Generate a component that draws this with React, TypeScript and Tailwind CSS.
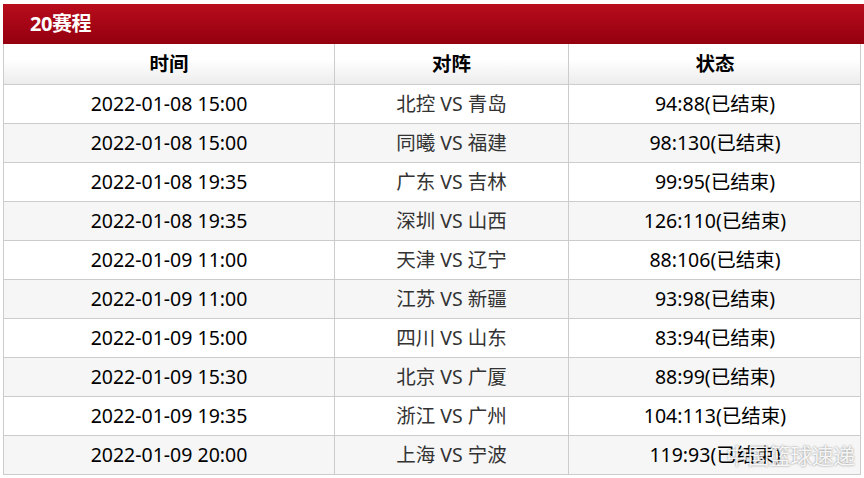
import type { FC } from 'react';

interface Match {
  time: string;
  home: string;
  away: string;
  score: string;
}

const matches: Match[] = [
  { time: '2022-01-08 15:00', home: '北控', away: '青岛', score: '94:88' },
  { time: '2022-01-08 15:00', home: '同曦', away: '福建', score: '98:130' },
  { time: '2022-01-08 19:35', home: '广东', away: '吉林', score: '99:95' },
  { time: '2022-01-08 19:35', home: '深圳', away: '山西', score: '126:110' },
  { time: '2022-01-09 11:00', home: '天津', away: '辽宁', score: '88:106' },
  { time: '2022-01-09 11:00', home: '江苏', away: '新疆', score: '93:98' },
  { time: '2022-01-09 15:00', home: '四川', away: '山东', score: '83:94' },
  { time: '2022-01-09 15:30', home: '北京', away: '广厦', score: '88:99' },
  { time: '2022-01-09 19:35', home: '浙江', away: '广州', score: '104:113' },
  { time: '2022-01-09 20:00', home: '上海', away: '宁波', score: '119:93' },
];

const Row: FC<{ m: Match; odd: boolean }> = ({ m, odd }) => (
  <div
    className={`grid grid-cols-[331px_234px_292px] h-[39px] border-b border-[#cccccc] ${
      odd ? 'bg-[#f6f6f6]' : 'bg-white'
    }`}
  >
    <div className="flex items-center justify-center border-r border-[#cccccc] text-black">
      {m.time}
    </div>
    <div className="flex items-center justify-center border-r border-[#cccccc] text-[#333333]">
      {m.home} VS {m.away}
    </div>
    <div className="flex items-center justify-center text-black">
      {m.score}(已结束)
    </div>
  </div>
);

export default function App() {
  return (
    <div
      className="relative w-[864px] h-[478px] bg-white pt-1 overflow-hidden text-[19.5px]"
      style={{ fontFamily: '"Noto Sans", "Noto Sans CJK SC", sans-serif' }}
    >
      {/* Title bar */}
      <div className="ml-[3px] h-[40px] flex items-center pl-[27px] bg-gradient-to-b from-[#b80d1c] to-[#94000f]">
        <span className="text-white font-bold text-[20px] tracking-tight">20赛程</span>
      </div>

      {/* Table */}
      <div className="ml-[3px] w-[858px] border-l border-r border-[#cccccc]">
        <div className="grid grid-cols-[331px_234px_292px] h-[41px] border-b border-[#cccccc] bg-gradient-to-b from-white from-40% to-[#ececec] font-bold text-black">
          <div className="flex items-center justify-center border-r border-[#cccccc]">时间</div>
          <div className="flex items-center justify-center border-r border-[#cccccc]">对阵</div>
          <div className="flex items-center justify-center">状态</div>
        </div>
        {matches.map((m, i) => (
          <Row key={i} m={m} odd={i % 2 === 1} />
        ))}
      </div>

      {/* Watermark */}
      <div className="absolute left-[726px] top-[439px] text-[22px] text-white/90 tracking-tight [text-shadow:0_0_2px_rgba(0,0,0,0.5)]">
        中国篮球速递
      </div>
    </div>
  );
}
